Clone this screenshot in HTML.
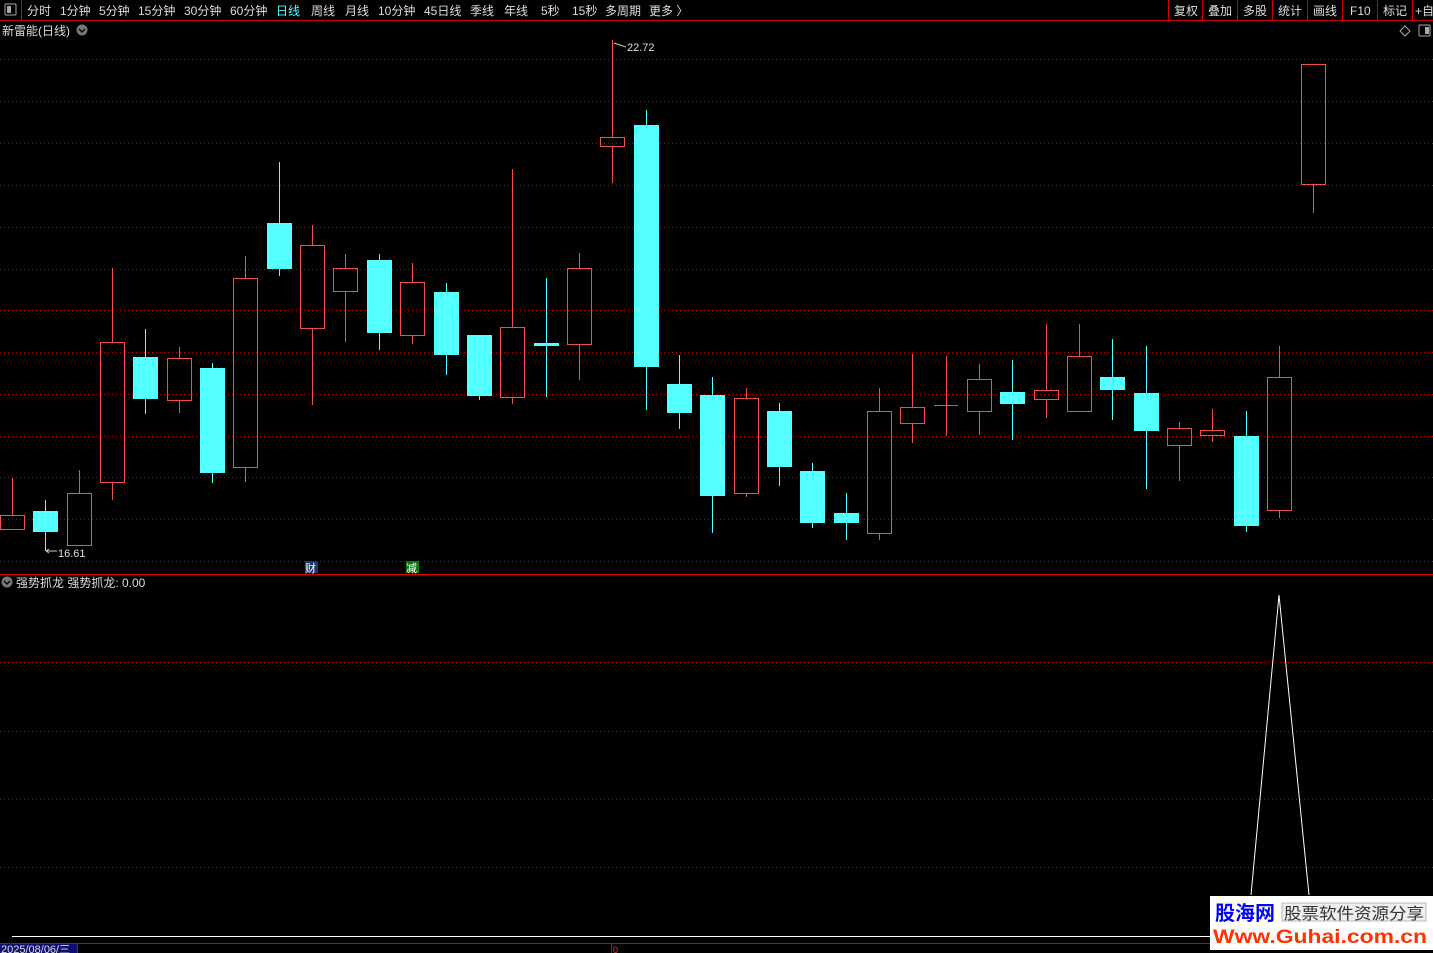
<!DOCTYPE html>
<html><head><meta charset="utf-8"><style>
html,body{margin:0;padding:0;background:#000;width:1433px;height:953px;overflow:hidden}
svg{display:block}
text{font-family:"Liberation Sans","Noto Sans CJK SC",sans-serif}
</style></head><body>
<svg width="1433" height="953" viewBox="0 0 1433 953" xmlns="http://www.w3.org/2000/svg">
<rect width="1433" height="953" fill="#000"/>
<line x1="0" y1="20.5" x2="1433" y2="20.5" stroke="#d00000" stroke-width="1"/>
<line x1="21.5" y1="0" x2="21.5" y2="20" stroke="#d00000"/>
<rect x="5" y="4" width="11" height="11" fill="none" stroke="#aaa" stroke-width="1" rx="1"/>
<rect x="7" y="6" width="4" height="7" fill="#aaa"/>
<g font-size="12" fill="#ddd">
<text x="27" y="15">分时</text><text x="60" y="15">1分钟</text><text x="99" y="15">5分钟</text>
<text x="138" y="15">15分钟</text><text x="184" y="15">30分钟</text><text x="230" y="15">60分钟</text>
<text x="276" y="15" fill="#54ffff">日线</text><text x="311" y="15">周线</text><text x="345" y="15">月线</text>
<text x="378" y="15">10分钟</text><text x="424" y="15">45日线</text><text x="470" y="15">季线</text>
<text x="504" y="15">年线</text><text x="541" y="15">5秒</text><text x="572" y="15">15秒</text>
<text x="605" y="15">多周期</text><text x="649" y="15">更多 〉</text>
<text x="1174" y="15">复权</text><text x="1208" y="15">叠加</text><text x="1243" y="15">多股</text>
<text x="1278" y="15">统计</text><text x="1313" y="15">画线</text><text x="1350" y="15">F10</text>
<text x="1383" y="15">标记</text><text x="1415" y="15">+自</text>
</g>
<g stroke="#d00000">
<line x1="1168.5" y1="0" x2="1168.5" y2="20"/><line x1="1202.5" y1="0" x2="1202.5" y2="20"/>
<line x1="1237.5" y1="0" x2="1237.5" y2="20"/><line x1="1272.5" y1="0" x2="1272.5" y2="20"/>
<line x1="1307.5" y1="0" x2="1307.5" y2="20"/><line x1="1342.5" y1="0" x2="1342.5" y2="20"/>
<line x1="1377.5" y1="0" x2="1377.5" y2="20"/><line x1="1412.5" y1="0" x2="1412.5" y2="20"/>
</g>
<text x="2" y="35" font-size="12" fill="#ddd">新雷能(日线)</text>
<circle cx="82" cy="30" r="5.5" fill="#777"/><path d="M79 29 L82 32 L85 29" stroke="#000" fill="none" stroke-width="1.3"/>
<path d="M1405 26 L1410 31 L1405 36 L1400 31Z" fill="none" stroke="#aaa"/>
<rect x="1419" y="25" width="11" height="11" fill="none" stroke="#aaa" rx="1"/><rect x="1425" y="27" width="4" height="7" fill="#aaa"/>
<g stroke="#c00000" stroke-dasharray="1 3" stroke-width="1">
<line x1="0" y1="59.5" x2="1433" y2="59.5"/><line x1="0" y1="101.5" x2="1433" y2="101.5"/>
<line x1="0" y1="143.5" x2="1433" y2="143.5"/><line x1="0" y1="185.5" x2="1433" y2="185.5"/>
<line x1="0" y1="227.5" x2="1433" y2="227.5"/><line x1="0" y1="269.5" x2="1433" y2="269.5"/>
<line x1="0" y1="310.5" x2="1433" y2="310.5"/><line x1="0" y1="352.5" x2="1433" y2="352.5"/>
<line x1="0" y1="394.5" x2="1433" y2="394.5"/><line x1="0" y1="436.5" x2="1433" y2="436.5"/>
<line x1="0" y1="477.5" x2="1433" y2="477.5"/><line x1="0" y1="519.5" x2="1433" y2="519.5"/>
<line x1="0" y1="561.5" x2="1433" y2="561.5"/>
<line x1="0" y1="662.5" x2="1433" y2="662.5"/><line x1="0" y1="731.5" x2="1433" y2="731.5"/>
<line x1="0" y1="799.5" x2="1433" y2="799.5"/><line x1="0" y1="867.5" x2="1433" y2="867.5"/>
</g>
<g stroke="#f05050" fill="none" stroke-width="1">
<path d="M12.5 478V515M12.5 529V530"/><rect x="0.5" y="515.5" width="24" height="14"/>
<path d="M79.5 470V493"/><rect x="67.5" y="493.5" width="24" height="52"/>
<path d="M112.5 268V342M112.5 482V500"/><rect x="100.5" y="342.5" width="24" height="140"/>
<path d="M179.5 347V358M179.5 400V413"/><rect x="167.5" y="358.5" width="24" height="42"/>
<path d="M245.5 256V278M245.5 467V482"/><rect x="233.5" y="278.5" width="24" height="189"/>
<path d="M312.5 225V245M312.5 328V405"/><rect x="300.5" y="245.5" width="24" height="83"/>
<path d="M345.5 254V268M345.5 291V342"/><rect x="333.5" y="268.5" width="24" height="23"/>
<path d="M412.5 263V282M412.5 335V344"/><rect x="400.5" y="282.5" width="24" height="53"/>
<path d="M512.5 169V327M512.5 397V404"/><rect x="500.5" y="327.5" width="24" height="70"/>
<path d="M579.5 253V268M579.5 344V380"/><rect x="567.5" y="268.5" width="24" height="76"/>
<path d="M612.5 40V137M612.5 146V183"/><rect x="600.5" y="137.5" width="24" height="9"/>
<path d="M746.5 388V398M746.5 493V497"/><rect x="734.5" y="398.5" width="24" height="95"/>
<path d="M879.5 388V411M879.5 533V540"/><rect x="867.5" y="411.5" width="24" height="122"/>
<path d="M912.5 354V407M912.5 423V443"/><rect x="900.5" y="407.5" width="24" height="16"/>
<path d="M946.5 356V436M934 405.5H958"/>
<path d="M979.5 364V379M979.5 411V435"/><rect x="967.5" y="379.5" width="24" height="32"/>
<path d="M1046.5 324V390M1046.5 399V418"/><rect x="1034.5" y="390.5" width="24" height="9"/>
<path d="M1079.5 324V356"/><rect x="1067.5" y="356.5" width="24" height="55"/>
<path d="M1179.5 422V428M1179.5 445V481"/><rect x="1167.5" y="428.5" width="24" height="17"/>
<path d="M1212.5 409V430M1212.5 435V442"/><rect x="1200.5" y="430.5" width="24" height="5"/>
<path d="M1279.5 346V377M1279.5 510V518"/><rect x="1267.5" y="377.5" width="24" height="133"/>
<path d="M1313.5 184V213"/><rect x="1301.5" y="64.5" width="24" height="120"/>
</g>
<g fill="#54ffff" stroke="#54ffff">
<path d="M45.5 500V551M145.5 329V414M212.5 363V483M279.5 162V276M379.5 254V350M446.5 283V375M479.5 335V400M546.5 278V397M646.5 110V410M679.5 355V429M712.5 377V533M779.5 403V486M812.5 463V528M846.5 493V540M1012.5 360V440M1112.5 339V420M1146.5 346V489M1246.5 411V532" fill="none"/>
<rect x="33" y="511" width="25" height="21" stroke="none"/>
<rect x="133" y="357" width="25" height="42" stroke="none"/>
<rect x="200" y="368" width="25" height="105" stroke="none"/>
<rect x="267" y="223" width="25" height="46" stroke="none"/>
<rect x="367" y="260" width="25" height="73" stroke="none"/>
<rect x="434" y="292" width="25" height="63" stroke="none"/>
<rect x="467" y="335" width="25" height="61" stroke="none"/>
<rect x="534" y="343" width="25" height="3" stroke="none"/>
<rect x="634" y="125" width="25" height="242" stroke="none"/>
<rect x="667" y="384" width="25" height="29" stroke="none"/>
<rect x="700" y="395" width="25" height="101" stroke="none"/>
<rect x="767" y="411" width="25" height="56" stroke="none"/>
<rect x="800" y="471" width="25" height="52" stroke="none"/>
<rect x="834" y="513" width="25" height="10" stroke="none"/>
<rect x="1000" y="392" width="25" height="12" stroke="none"/>
<rect x="1100" y="377" width="25" height="13" stroke="none"/>
<rect x="1134" y="393" width="25" height="38" stroke="none"/>
<rect x="1234" y="436" width="25" height="90" stroke="none"/>
</g>
<path d="M614 43 L620 45 L626 47" stroke="#ccc" fill="none"/>
<text x="627" y="51" font-size="11" fill="#ddd">22.72</text>
<path d="M46 551 H57 M46 551 l3 -2 M46 551 l3 2" stroke="#ccc" fill="none"/>
<text x="58" y="557" font-size="11" fill="#ddd">16.61</text>
<rect x="305" y="561" width="13" height="12" fill="#1a3a6a"/><text x="305" y="572" font-size="11" fill="#fff">财</text>
<rect x="406" y="561" width="13" height="12" fill="#0a7a0a"/><text x="406" y="572" font-size="11" fill="#fff">减</text>
<line x1="0" y1="574.5" x2="1433" y2="574.5" stroke="#e00000" stroke-width="1.2"/>
<circle cx="7" cy="582" r="5.5" fill="#777"/><path d="M4 581 L7 584 L10 581" stroke="#000" fill="none" stroke-width="1.3"/>
<text x="16" y="587" font-size="12" fill="#ddd">强势抓龙  强势抓龙: 0.00</text>
<path d="M1251 895 L1279 595 L1309 895" stroke="#fff" fill="none" stroke-width="1"/>
<line x1="12" y1="936.5" x2="1215" y2="936.5" stroke="#fff"/>
<line x1="0" y1="943.5" x2="1433" y2="943.5" stroke="#d00000"/>
<rect x="0" y="944" width="77" height="9" fill="#101070"/>
<line x1="77.5" y1="944" x2="77.5" y2="953" stroke="#d00000"/>
<text x="1" y="953" font-size="11" fill="#ddd">2025/08/06/三</text>
<line x1="611.5" y1="944" x2="611.5" y2="953" stroke="#d00000"/>
<text x="613" y="953" font-size="9" fill="#f04040">0</text>
<rect x="1210" y="896" width="223" height="54" fill="#fff"/>
<text x="1215" y="920" font-size="20" font-weight="bold" fill="#0000ff" font-family="Noto Sans CJK SC,sans-serif">股海网</text>
<rect x="1282" y="903" width="144" height="18" fill="#eee" stroke="#bbb"/>
<text x="1284" y="919" font-size="16" fill="#333" font-family="Noto Serif CJK SC,serif" textLength="140" lengthAdjust="spacingAndGlyphs">股票软件资源分享</text>
<text x="1213" y="943" font-size="19" font-weight="bold" fill="#ff3300" textLength="214" lengthAdjust="spacingAndGlyphs">Www.Guhai.com.cn</text>
</svg>
</body></html>
